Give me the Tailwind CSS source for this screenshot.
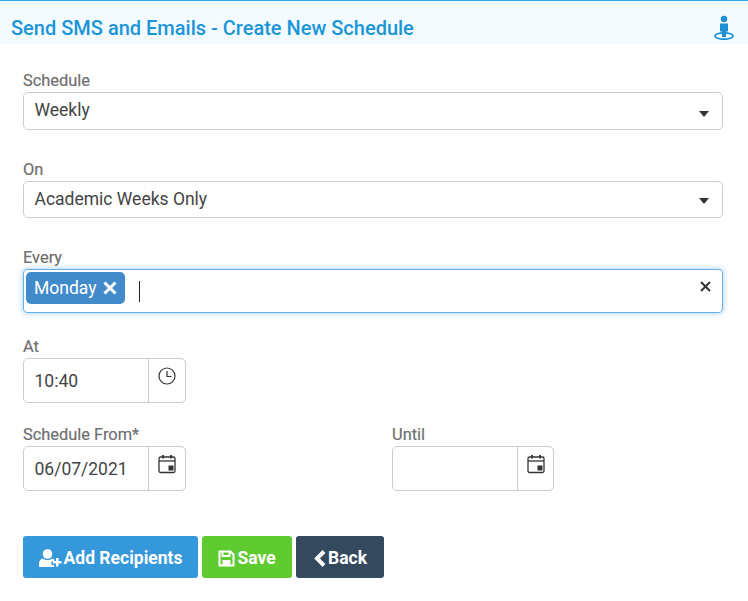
<!DOCTYPE html>
<html lang="en">
<head>
<meta charset="UTF-8" />
<meta name="viewport" content="width=device-width, initial-scale=1" />
<title>Create New Schedule</title>
<script src="https://cdn.jsdelivr.net/npm/@tailwindcss/browser@4"></script>
</head>
<body class="bg-white font-['Roboto',sans-serif] h-[601px] w-[748px] overflow-hidden">
  <div class="h-[44px] bg-[#f3fbff] border-t border-[#2ea3e0] flex items-center justify-between pl-[11px] pr-[13px]">
    <h1 class="text-[20px] font-medium text-[#1b95d8] leading-none pt-[11px]">Send SMS and Emails - Create New Schedule</h1>
    <svg width="22" height="26" viewBox="0 0 22 26" class="text-[#1b8fd2] mt-[9px]" fill="currentColor">
      <circle cx="11" cy="5" r="3.200" />
      <path d="M7 9.500h8v8h-2v5.500h-4v-5.500h-2z" />
      <ellipse cx="11" cy="22" rx="9" ry="3.200" fill="none" stroke="currentColor" stroke-width="1.800" />
    </svg>
  </div>

  <div class="px-[23px] pt-[28px]">
    <label class="block text-[16.4px] text-[#6f6f6f] leading-[18px] mb-[2px] [-webkit-text-stroke:0.2px_#6f6f6f]">Schedule</label>
    <div class="h-[38px] w-[700px] border border-[#cccccc] rounded-[5px] flex items-center justify-between pl-[10.5px] pr-[13px] text-[17.5px] text-[#444444]">
      <span class="pb-[2px]">Weekly</span>
      <span class="w-0 h-0 border-x-[5px] border-x-transparent border-t-[6px] border-t-[#333333] mt-[6px]"></span>
    </div>

    <label class="block text-[16.4px] text-[#6f6f6f] leading-[18px] mb-[2px] mt-[31px] [-webkit-text-stroke:0.2px_#6f6f6f]">On</label>
    <div class="h-[37px] w-[700px] border border-[#cccccc] rounded-[5px] flex items-center justify-between pl-[10.5px] pr-[13px] text-[17.5px] text-[#444444]">
      <span>Academic Weeks Only</span>
      <span class="w-0 h-0 border-x-[5px] border-x-transparent border-t-[6px] border-t-[#333333] mt-[2px]"></span>
    </div>

    <label class="block text-[16.4px] text-[#6f6f6f] leading-[18px] mb-[2px] mt-[31px] [-webkit-text-stroke:0.2px_#6f6f6f]">Every</label>
    <div class="h-[44px] w-[700px] border border-[#66aee9] rounded-[4px] shadow-[0_0_6px_rgba(102,175,233,0.6)] flex items-center pl-[2px] pr-[11px]">
      <span class="h-[32px] w-[99px] mb-[6px] rounded-[5px] bg-[#428bca] text-white text-[17.5px] flex items-center pl-[8px] gap-[7px]">
        Monday
        <svg width="14" height="14" viewBox="0 0 14 14" fill="none" stroke="currentColor" stroke-width="3"><path d="M1.500 1.500l11 11M12.500 1.500l-11 11" /></svg>
      </span>
      <span class="ml-[14px] w-px h-[21px] bg-[#222222]"></span>
      <svg class="ml-auto mb-[9px]" width="11" height="11" viewBox="0 0 11 11" fill="none" stroke="#333333" stroke-width="2"><path d="M1 1l9 9M10 1l-9 9" /></svg>
    </div>

    <label class="block text-[16.4px] text-[#6f6f6f] leading-[18px] mb-[2px] mt-[25px] [-webkit-text-stroke:0.2px_#6f6f6f]">At</label>
    <div class="h-[45px] w-[163px] border border-[#cccccc] rounded-[5px] flex text-[17.5px] text-[#444444]">
      <div class="w-[125px] border-r border-[#cccccc] pl-[10.5px] flex items-center pt-[1px]">10:40</div>
      <div class="flex-1 flex justify-center pt-[8px]">
        <svg width="18" height="18" viewBox="0 0 18 18" fill="none" stroke="#333333" stroke-width="1.200"><circle cx="9" cy="9" r="8" /><path d="M9 4v5.500h4.500" /></svg>
      </div>
    </div>

    <div class="flex mt-[23px]">
      <div class="w-[369px]">
        <label class="block text-[16.4px] text-[#6f6f6f] leading-[18px] mb-[2px] [-webkit-text-stroke:0.2px_#6f6f6f]">Schedule From*</label>
        <div class="h-[45px] w-[163px] border border-[#cccccc] rounded-[5px] flex text-[17.5px] text-[#444444]">
          <div class="w-[125px] border-r border-[#cccccc] pl-[10.5px] flex items-center pt-[1px]">06/07/2021</div>
          <div class="flex-1 flex justify-center pt-[7px]">
            <svg width="18" height="20" viewBox="0 0 18 20" fill="none" stroke="#333333" stroke-width="1.300"><rect x="1" y="3" width="16" height="15.500" rx="1.500" /><path d="M1 7h16" /><path d="M5 1v3.500M13 1v3.500" stroke-width="1.800" /><rect x="10.500" y="11.500" width="5" height="5" fill="#333333" stroke="none" /></svg>
          </div>
        </div>
      </div>
      <div>
        <label class="block text-[16.4px] text-[#6f6f6f] leading-[18px] mb-[2px] [-webkit-text-stroke:0.2px_#6f6f6f]">Until</label>
        <div class="h-[45px] w-[162px] border border-[#cccccc] rounded-[5px] flex">
          <div class="w-[125px] border-r border-[#cccccc]"></div>
          <div class="flex-1 flex justify-center pt-[7px]">
            <svg width="18" height="20" viewBox="0 0 18 20" fill="none" stroke="#333333" stroke-width="1.300"><rect x="1" y="3" width="16" height="15.500" rx="1.500" /><path d="M1 7h16" /><path d="M5 1v3.500M13 1v3.500" stroke-width="1.800" /><rect x="10.500" y="11.500" width="5" height="5" fill="#333333" stroke="none" /></svg>
          </div>
        </div>
      </div>
    </div>

    <div class="flex gap-[4px] mt-[45px] text-white text-[17.5px] font-bold">
      <button class="h-[42px] w-[175px] rounded-[3px] bg-[#3498db] flex items-center justify-center gap-[2px] pt-[2px]">
        <svg width="23" height="18" viewBox="0 0 23 18" fill="currentColor"><circle cx="8.500" cy="5" r="4.800" /><path d="M0 18v-3.500c0-3 2-5 4-5 1.200 1 2.800 1.500 4.500 1.500s3.300-.5 4.500-1.500c.8 0 1.600.3 2.200.8v1.900h-2.700v3.800h2.700V18z" /><path d="M17 9v3h-3v2.500h3v3h2.500v-3h3V12h-3V9z" /></svg>
        Add Recipients
      </button>
      <button class="h-[42px] w-[90px] rounded-[3px] bg-[#60ca31] flex items-center justify-center gap-[2px] pt-[2px]">
        <svg width="17" height="17" viewBox="0 0 17 17" fill="none" stroke="currentColor" stroke-width="2"><path d="M1.500 1.500h11l3 3v11h-14z" /><path d="M4.500 1.500v4.500h7v-4.500" /><rect x="4.500" y="10" width="8" height="5.500" fill="currentColor" stroke="none" /></svg>
        Save
      </button>
      <button class="h-[42px] w-[88px] rounded-[3px] bg-[#34495e] flex items-center justify-center gap-[2px] pt-[2px]">
        <svg width="13" height="19" viewBox="0 0 13 19" fill="none" stroke="currentColor" stroke-width="4"><path d="M11 2.500l-7 7 7 7" /></svg>
        Back
      </button>
    </div>
  </div>
</body>
</html>
